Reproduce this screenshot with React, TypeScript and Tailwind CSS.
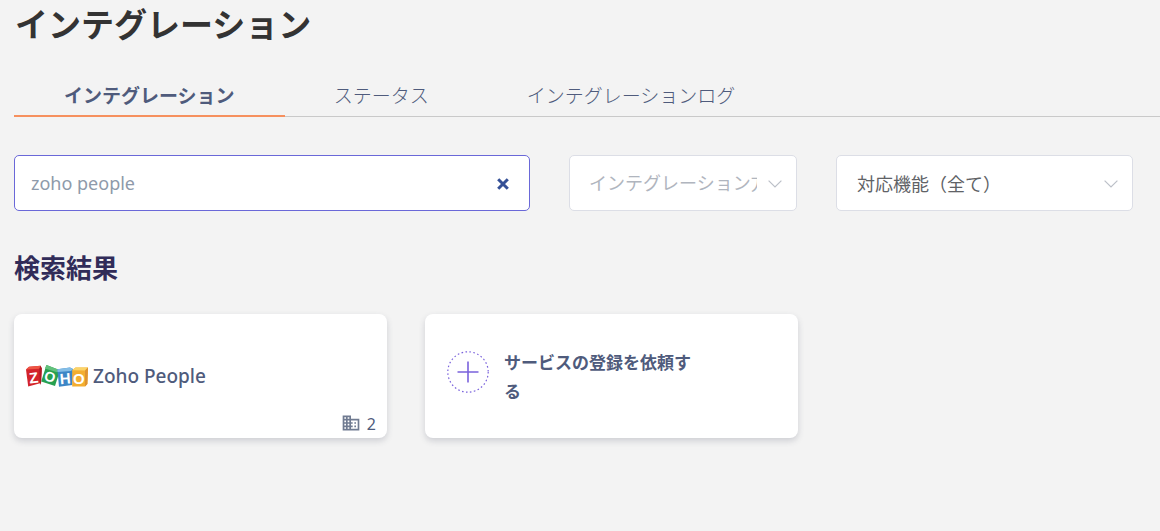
import { useState } from "react";

const tabs = [
  { id: "integrations", label: "インテグレーション" },
  { id: "status", label: "ステータス" },
  { id: "logs", label: "インテグレーションログ" },
];

function Chevron() {
  return (
    <svg
      aria-hidden="true"
      viewBox="0 0 14 8"
      className="pointer-events-none absolute top-[25px] right-[15px] h-2 w-[14px]"
      fill="none"
      stroke="#bcc0c8"
      strokeWidth="1.2"
    >
      <path d="M0.6 0.6 7 7 13.4 0.6" />
    </svg>
  );
}

function ZohoLogo() {
  return (
    <svg
      role="img"
      aria-label="Zoho"
      viewBox="0 -3 62 28"
      className="h-7 w-[62px] shrink-0 overflow-visible"
      fontFamily="'Liberation Sans', sans-serif"
      fontWeight="700"
      fill="#fff"
      textAnchor="middle"
    >
      <path d="M0 4.5 3 1.8 14.6 0.8 15.8 3.5 15 18 2.2 21.6Z" fill="#d3232b" />
      <path d="M0 4.5 3 1.8 14.6 0.8 13.4 3.8Z" fill="#ee5544" />
      <path d="M13.4 3.8 14.6 0.8 15.8 3.5 15 18 14 20Z" fill="#a91c25" />
      <path d="M20.5 0 34 5.2 29 21 15.2 16.5Z" fill="#27a050" />
      <path d="M20.5 0 34 5.2 31 7.2 18.8 3.4Z" fill="#62c07b" />
      <path d="M31.4 4.2 44 2.6 47 4 46.4 20 33 21.8Z" fill="#3d86c6" />
      <path d="M31.4 4.2 44 2.6 47 4 45 6 31.6 7Z" fill="#83bde6" />
      <path d="M46.2 5.2 49.5 2.5 62 2.5 61.4 19 59 21.6 46.2 21.4Z" fill="#f4ae30" />
      <path d="M46.2 5.2 49.5 2.5 62 2.5 59 5.6Z" fill="#fbd468" />
      <path d="M59 5.6 62 2.5 61.4 19 59 21.6Z" fill="#de9230" />
      <text x="7.6" y="18" fontSize="15" transform="rotate(-7 7.6 12)">Z</text>
      <text x="24.2" y="16.8" fontSize="14" transform="rotate(18 24.2 11)">O</text>
      <text x="39.2" y="18.8" fontSize="15" transform="rotate(-5 39.2 13)">H</text>
      <text x="52.8" y="19" fontSize="15">O</text>
    </svg>
  );
}

function BuildingIcon() {
  return (
    <svg aria-hidden="true" viewBox="0 0 24 24" className="mb-0.5 size-5" fill="#707b91">
      <path d="M12 7V3H2v18h20V7H12zM6 19H4v-2h2v2zm0-4H4v-2h2v2zm0-4H4V9h2v2zm0-4H4V5h2v2zm4 12H8v-2h2v2zm0-4H8v-2h2v2zm0-4H8V9h2v2zm0-4H8V5h2v2zm10 12h-8v-2h2v-2h-2v-2h2v-2h-2V9h8v10zm-2-8h-2v2h2v-2zm0 4h-2v2h2v-2z" />
    </svg>
  );
}

export default function App() {
  const [active, setActive] = useState("integrations");
  const [query, setQuery] = useState("zoho people");

  return (
    <main className="min-h-screen bg-[#f3f3f3] pl-[14px] font-['Noto_Sans','Noto_Sans_CJK_JP',sans-serif] text-[#4f5b7c]">
      <h1 className="pt-[5px] pl-px text-[33px] leading-10 font-bold text-[#333]">インテグレーション</h1>

      <nav className="mt-[31px] flex border-b border-[#c9c9c9]">
        {tabs.map((tab) => (
          <button
            key={tab.id}
            type="button"
            aria-current={active === tab.id ? "page" : undefined}
            onClick={() => setActive(tab.id)}
            className={
              active === tab.id
                ? "-mb-px h-[41px] cursor-pointer border-b-2 border-[#f6905e] px-[50px] text-[19px] leading-10 font-bold"
                : "-mb-px h-[41px] cursor-pointer border-b-2 border-transparent px-[49px] text-[19px] leading-10 font-light"
            }
          >
            {tab.label}
          </button>
        ))}
      </nav>

      <form
        className="mt-[38px] grid grid-cols-[516fr_228fr_297fr] gap-[39px] pr-[27px] text-lg"
        onSubmit={(e) => e.preventDefault()}
      >
        <div className="relative">
          <input
            type="text"
            aria-label="サービスを検索"
            value={query}
            onChange={(e) => setQuery(e.target.value)}
            className="h-14 w-full rounded-[5px] border border-[#6a68d8] bg-white pr-12 pl-4 text-[#8e9aaa] outline-none"
          />
          <button
            type="button"
            aria-label="クリア"
            onClick={() => setQuery("")}
            className="absolute top-[19px] right-[17px] flex size-5 cursor-pointer items-center justify-center"
          >
            <svg aria-hidden="true" viewBox="0 0 12 12" className="size-3" stroke="#355096" strokeWidth="3">
              <path d="M1.2 1.2 10.8 10.8M10.8 1.2 1.2 10.8" />
            </svg>
          </button>
        </div>
        <div className="relative">
          <select
            aria-label="インテグレーション方法"
            className="h-14 w-full appearance-none rounded-[5px] border border-[#dcdee6] bg-white pr-[39px] pl-[19px] text-[#b0b5be]"
          >
            <option>インテグレーション方法</option>
          </select>
          <Chevron />
        </div>
        <div className="relative">
          <select
            aria-label="対応機能"
            className="h-14 w-full appearance-none rounded-[5px] border border-[#dcdee6] bg-white pt-0.5 pr-10 pl-5 text-[#606266]"
          >
            <option>対応機能（全て）</option>
          </select>
          <Chevron />
        </div>
      </form>

      <h2 className="mt-[37px] text-[26px] leading-10 font-bold text-[#312c59]">検索結果</h2>

      <div className="mt-[26px] flex flex-wrap gap-[38px]">
        <a
          href="#zoho-people"
          className="flex h-[124px] w-[373px] flex-col rounded-lg bg-white px-3 shadow-[0_3px_6px_rgba(60,64,90,0.2)]"
        >
          <span className="mt-12 flex items-center gap-[5px]">
            <ZohoLogo />
            <span className="text-[19px] leading-7 font-medium">Zoho People</span>
          </span>
          <span className="-mr-px mt-auto mb-0.5 flex items-center justify-end gap-[6px] text-base">
            <BuildingIcon />
            <span>2</span>
          </span>
        </a>
        <button
          type="button"
          className="flex h-[124px] w-[373px] cursor-pointer items-center rounded-lg bg-white pl-[22px] text-left shadow-[0_3px_6px_rgba(60,64,90,0.2)]"
        >
          <svg aria-hidden="true" viewBox="0 0 42 42" className="mb-2 size-[42px] shrink-0" fill="none" stroke="#7a62dc">
            <circle cx="21" cy="21" r="20.2" strokeWidth="1.2" strokeDasharray="1.6 2.4" />
            <path d="M21 10.5V31.5M10.5 21H31.5" strokeWidth="1.6" />
          </svg>
          <span className="mt-0.5 ml-[15px] w-[190px] text-[17px] leading-[29px] font-bold">
            サービスの登録を依頼する
          </span>
        </button>
      </div>
    </main>
  );
}
